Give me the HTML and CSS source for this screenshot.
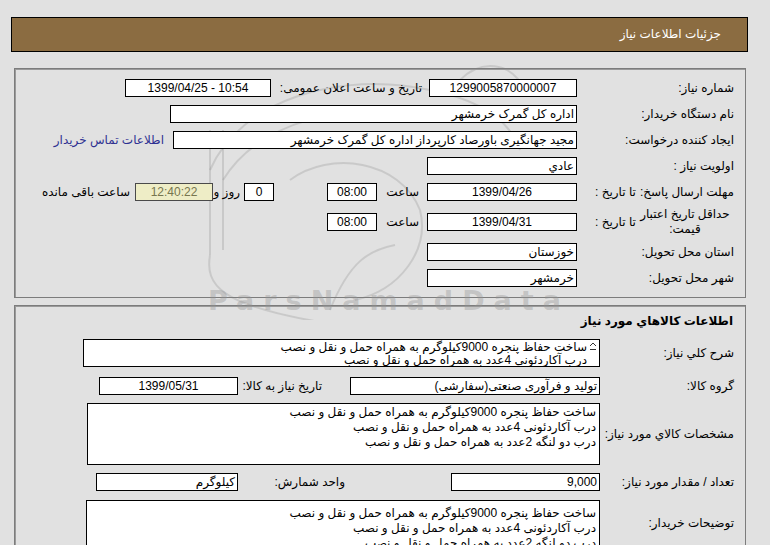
FILE: index.html
```html
<!DOCTYPE html>
<html dir="rtl" lang="fa">
<head>
<meta charset="utf-8">
<link rel="stylesheet" href="styles.css">
</head>
<body>
<div class="page">
  <svg class="wm-logo" width="420" height="260" viewBox="0 0 420 260">
    <path d="M30 70 L30 195" />
    <path d="M43 70 L43 190" />
    <path d="M30 110 C 60 40, 160 10, 250 30" />
    <path d="M43 120 C 80 60, 170 40, 250 55" />
    <path d="M30 195 C 25 225, 40 245, 140 262" />
    <path d="M250 30 C 300 40, 330 60, 340 90" />
    <path d="M150 250 C 170 200, 190 190, 215 185" />
    <path d="M280 20 C 300 0, 330 0, 345 30" />
    <path d="M110 120 C 150 90, 220 100, 240 150 C 250 190, 220 230, 175 240" />
  </svg>

  <div class="header">جزئیات اطلاعات نیاز</div>

  <div class="panel p1">
    <div class="row">
      <div class="lbl">شماره نیاز:</div>
      <div class="box c w-num">1299005870000007</div>
      <div class="lbl2">تاریخ و ساعت اعلان عمومی:</div>
      <div class="box c w-pub" dir="ltr">1399/04/25 - 10:54</div>
    </div>
    <div class="row">
      <div class="lbl">نام دستگاه خریدار:</div>
      <div class="box w-org">اداره کل گمرک خرمشهر</div>
    </div>
    <div class="row">
      <div class="lbl">ایجاد کننده درخواست:</div>
      <div class="box w-creator">مجید جهانگیری باورصاد کارپرداز اداره کل گمرک خرمشهر</div>
      <a class="contact" href="#">اطلاعات تماس خریدار</a>
    </div>
    <div class="row">
      <div class="lbl">اولویت نیاز :</div>
      <div class="box w-std">عادي</div>
    </div>
    <div class="row">
      <div class="lbl split"><span>مهلت ارسال پاسخ:</span><span class="to">تا تاریخ :</span></div>
      <div class="box c w-std">1399/04/26</div>
      <div class="hour">ساعت</div>
      <div class="box c w-time">08:00</div>
      <div class="box c w-day">0</div>
      <div class="day-lbl">روز و</div>
      <div class="box c w-left remain">12:40:22</div>
      <div class="left-lbl">ساعت باقی مانده</div>
    </div>
    <div class="row tall">
      <div class="lbl split"><span class="two">حداقل تاریخ اعتبار قیمت:</span><span class="to">تا تاریخ :</span></div>
      <div class="box c w-std">1399/04/31</div>
      <div class="hour">ساعت</div>
      <div class="box c w-time">08:00</div>
    </div>
    <div class="row">
      <div class="lbl">استان محل تحویل:</div>
      <div class="box w-std">خوزستان</div>
    </div>
    <div class="row">
      <div class="lbl">شهر محل تحویل:</div>
      <div class="box w-std">خرمشهر</div>
    </div>
  </div>

  <div class="panel p2">
    <div class="title">اطلاعات کالاهاي مورد نیاز</div>
    <div class="row2 r-desc">
      <div class="lbl-b">شرح کلي نیاز:</div>
      <div class="area a-desc">
        <svg class="scroll" width="8" height="10" viewBox="0 0 8 10"><path d="M1 5 L4 2 L7 5" /><path d="M1 8.5 L7 8.5" /></svg>
        <div>ساخت حفاظ پنجره 9000کیلوگرم به همراه حمل و نقل و نصب</div>
        <div>درب آکاردئونی 4عدد به همراه حمل و نقل و نصب</div>
      </div>
    </div>
    <div class="row2 r-group">
      <div class="lbl-b">گروه کالا:</div>
      <div class="box w-group">تولید و فرآوری صنعتی(سفارشی)</div>
      <div class="lbl3">تاریخ نیاز به کالا:</div>
      <div class="box c w-need">1399/05/31</div>
    </div>
    <div class="row2 r-spec">
      <div class="lbl-b">مشخصات کالاي مورد نیاز:</div>
      <div class="area a-spec">
        <div>ساخت حفاظ پنجره 9000کیلوگرم به همراه حمل و نقل و نصب</div>
        <div>درب آکاردئونی 4عدد به همراه حمل و نقل و نصب</div>
        <div>درب دو لنگه 2عدد به همراه حمل و نقل و نصب</div>
      </div>
    </div>
    <div class="row2 r-qty">
      <div class="lbl-b">تعداد / مقدار مورد نیاز:</div>
      <div class="box w-qty">9,000</div>
      <div class="lbl4">واحد شمارش:</div>
      <div class="box w-unit">کیلوگرم</div>
    </div>
    <div class="row2 r-notes">
      <div class="lbl-b">توضیحات خریدار:</div>
      <div class="area a-notes">
        <div>ساخت حفاظ پنجره 9000کیلوگرم به همراه حمل و نقل و نصب</div>
        <div>درب آکاردئونی 4عدد به همراه حمل و نقل و نصب</div>
        <div>درب دو لنگه 2عدد به همراه حمل و نقل و نصب</div>
      </div>
    </div>
  </div>

  <div class="wm-text" dir="ltr">ParsNamadData</div>
</div>
</body>
</html>
```

FILE: styles.css
```css
html, body {
  margin: 0;
  padding: 0;
  background: #e1e1e1;
}
body {
  font-family: "Liberation Sans", "DejaVu Sans", sans-serif;
  font-size: 12px;
  color: #000;
}
.page {
  position: relative;
  padding: 17px 22px 0 11px;
  height: 545px;
  box-sizing: border-box;
  overflow: hidden;
}
.header {
  position: relative;
  height: 35px;
  box-sizing: border-box;
  background: #8b6c41;
  border: 1px solid #000;
  color: #fff;
  line-height: 33px;
  padding-right: 26px;
  font-size: 12px;
}
.panel {
  position: relative;
  margin: 16px 2px 0 3px;
  border: 1px solid #7c7c7c;
  box-shadow: inset 1px 1px 0 #9a9a9a;
  padding-right: 11px;
}
.p1 {
  padding-top: 6px;
  padding-bottom: 6px;
}
.p2 {
  margin-top: 7px;
  padding-top: 6px;
  height: 300px;
}
.row {
  display: flex;
  align-items: center;
  height: 26px;
}
.row.tall {
  height: 34px;
}
.lbl {
  width: 157px;
  flex: none;
  white-space: nowrap;
}
.lbl.split {
  display: flex;
  justify-content: space-between;
  align-items: center;
}
.lbl .to {
  margin-left: 18px;
}
.lbl .two {
  width: 104px;
  white-space: normal;
  text-align: center;
  line-height: 15px;
}
.box {
  height: 18px;
  box-sizing: border-box;
  border: 1px solid #000;
  background: #fff;
  line-height: 16px;
  padding: 0 2px;
  white-space: nowrap;
  overflow: hidden;
  flex: none;
}
.box.c {
  text-align: center;
}
.w-num { width: 148px; }
.w-pub { width: 146px; }
.lbl2 {
  width: 158px;
  padding-right: 7px;
  box-sizing: border-box;
  white-space: nowrap;
}
.w-org { width: 407px; }
.w-creator { width: 404px; }
.contact {
  margin-right: 9px;
  color: #2e3192;
  text-decoration: none;
  white-space: nowrap;
}
.w-std { width: 150px; }
.hour {
  width: 50px;
  padding-right: 8px;
  box-sizing: border-box;
}
.w-time { width: 50px; }
.w-day {
  width: 30px;
  margin-right: 53px;
}
.day-lbl {
  width: 31px;
  padding-right: 4px;
  box-sizing: border-box;
  white-space: nowrap;
}
.w-left { width: 78px; }
.remain {
  background: #eeedc6;
  color: #76764f;
  border-color: #4a4a4a;
}
.left-lbl {
  margin-right: 5px;
  white-space: nowrap;
}

.title {
  font-weight: bold;
  font-size: 12px;
  line-height: 18px;
  height: 18px;
  padding-right: 1px;
}
.row2 {
  display: flex;
  align-items: center;
}
.lbl-b {
  width: 134px;
  flex: none;
  white-space: nowrap;
}
.area {
  position: relative;
  box-sizing: border-box;
  border: 1px solid #000;
  background: #fff;
  padding: 1px 3px 0 0;
  line-height: 15px;
  white-space: nowrap;
  overflow: hidden;
  flex: none;
}
.r-desc { margin-top: 9px; }
.a-desc {
  width: 517px;
  height: 28px;
  line-height: 13px;
  padding-right: 12px;
}
.scroll {
  position: absolute;
  right: 2px;
  top: 1px;
}
.scroll path {
  fill: none;
  stroke: #333;
  stroke-width: 1;
}
.r-group { margin-top: 10px; }
.w-group { width: 250px; }
.lbl3 {
  width: 112px;
  padding-right: 28px;
  box-sizing: border-box;
  white-space: nowrap;
}
.w-need { width: 139px; }
.r-spec { margin-top: 8px; }
.a-spec {
  width: 513px;
  height: 62px;
}
.r-qty { margin-top: 8px; }
.w-qty { width: 149px; }
.lbl4 {
  width: 213px;
  padding-right: 106px;
  box-sizing: border-box;
  white-space: nowrap;
}
.w-unit { width: 142px; }
.r-notes {
  margin-top: 9px;
  align-items: flex-start;
}
.r-notes .lbl-b {
  margin-top: 16px;
}
.a-notes {
  width: 514px;
  height: 62px;
  padding-top: 5px;
}

.wm-logo {
  position: absolute;
  left: 180px;
  top: 60px;
  pointer-events: none;
}
.wm-logo path {
  fill: none;
  stroke: rgba(120, 120, 120, 0.22);
  stroke-width: 2;
}
.wm-text {
  position: absolute;
  left: 208px;
  top: 285px;
  font-family: "DejaVu Sans", sans-serif;
  font-weight: bold;
  font-size: 27px;
  letter-spacing: 9px;
  color: rgba(150, 150, 150, 0.4);
  pointer-events: none;
}
```
